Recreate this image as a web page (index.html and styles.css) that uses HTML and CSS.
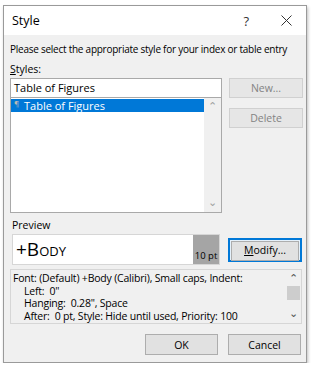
FILE: index.html
```html
<!DOCTYPE html>
<html lang="en">
<head>
    <meta charset="UTF-8">
    <title>Style</title>
    <link rel="stylesheet" href="styles.css">
</head>
<body>
    <div class="dialog">
        <div class="titlebar">
            <span class="title">Style</span>
            <span class="help">?</span>
            <svg class="close" width="11" height="11" viewBox="0 0 11 11">
                <path d="M0.5 0.5 L10.5 10.5 M10.5 0.5 L0.5 10.5" stroke="#333" stroke-width="1"/>
            </svg>
        </div>

        <div class="content">
            <p class="intro">Please select the appropriate style for your index or table entry</p>
            <div class="label"><u>S</u>tyles:</div>

            <div class="styles-row">
                <div class="styles-col">
                    <div class="name-input">Table of Figures</div>
                    <div class="listbox">
                        <div class="list-items">
                            <div class="list-item selected"><span class="pilcrow">¶</span>Table of Figures</div>
                        </div>
                        <div class="vscroll">
                            <span class="arrow">&#8963;</span>
                            <span class="arrow down">&#8964;</span>
                        </div>
                    </div>
                </div>
                <div class="side-buttons">
                    <button class="btn disabled">New...</button>
                    <button class="btn disabled">Delete</button>
                </div>
            </div>

            <div class="label preview-label">Preview</div>
            <div class="preview-row">
                <div class="preview">
                    <span class="sample">+Body</span>
                    <span class="size">10 pt</span>
                </div>
                <button class="btn focused"><span><u>M</u>odify...</span></button>
            </div>

            <div class="description">
                <div class="desc-text">
                    Font: (Default) +Body (Calibri), Small caps, Indent:<br>
                    <span class="indent">Left:&nbsp; 0"</span><br>
                    <span class="indent">Hanging:&nbsp; 0.28", Space</span><br>
                    <span class="indent">After:&nbsp; 0 pt, Style: Hide until used, Priority: 100</span>
                </div>
                <div class="vscroll small">
                    <span class="arrow">&#8963;</span>
                    <span class="thumb"></span>
                    <span class="arrow down">&#8964;</span>
                </div>
            </div>

            <div class="footer">
                <button class="btn">OK</button>
                <button class="btn">Cancel</button>
            </div>
        </div>
    </div>
</body>
</html>
```

FILE: styles.css
```css
body {
    margin: 0;
    padding: 0;
    background: #ffffff;
    font-family: 'Open Sans', 'Noto Sans', sans-serif;
    color: #000;
}

.dialog {
    width: 302px;
    height: 356px;
    margin: 5px 0 0 3px;
    background: #f0f0f0;
    border: 1px solid #9a9a9a;
    box-shadow: 1px 2px 3px rgba(0, 0, 0, 0.25);
    display: flex;
    flex-direction: column;
}

.titlebar {
    height: 29px;
    background: #ffffff;
    display: flex;
    align-items: center;
    padding-left: 8px;
}

.title {
    font-size: 12.5px;
    flex: 1;
}

.help {
    font-size: 13px;
    color: #333;
    margin-right: 32px;
}

.close {
    margin-right: 14px;
}

.content {
    padding: 5px 3px 0 6px;
    font-size: 10.5px;
}

.intro {
    margin: 0;
    height: 19px;
    line-height: 19px;
    font-size: 10px;
    letter-spacing: -0.25px;
    white-space: nowrap;
}

.label {
    height: 15px;
    line-height: 15px;
    margin-top: 3px;
}

.styles-row {
    display: flex;
    margin-top: 1px;
}

.styles-col {
    width: 212px;
}

.name-input {
    height: 18px;
    line-height: 17px;
    background: #fff;
    border: 1px solid #a9a9a9;
    border-bottom: none;
    padding-left: 3px;
    font-size: 11px;
}

.listbox {
    height: 114px;
    background: #fff;
    border: 1px solid #a9a9a9;
    display: flex;
}

.list-items {
    flex: 1;
    padding-top: 1px;
}

.list-item {
    height: 13px;
    line-height: 13px;
    font-size: 11px;
    padding-left: 3px;
}

.list-item.selected {
    background: #0078d7;
    color: #fff;
}

.pilcrow {
    display: inline-block;
    width: 8px;
    color: #b8b8b8;
    font-size: 8px;
    line-height: 8px;
    vertical-align: top;
    margin-right: 2px;
}

.vscroll {
    width: 17px;
    background: #f0f0f0;
    display: flex;
    flex-direction: column;
    justify-content: space-between;
    align-items: center;
    color: #a0a0a0;
}

.arrow {
    font-size: 11px;
    height: 14px;
    line-height: 16px;
}

.arrow.down {
    line-height: 8px;
}

.side-buttons {
    display: flex;
    flex-direction: column;
    gap: 10px;
    margin-left: 7px;
}

.btn {
    width: 74px;
    height: 20px;
    font-family: inherit;
    font-size: 10.5px;
    background: #e1e1e1;
    border: 1px solid #adadad;
    color: #000;
    padding: 0;
}

.btn.disabled {
    background: #e6e6e6;
    border-color: #d0d0d0;
    color: #838383;
}

.btn.focused {
    height: 24px;
    border: 2px solid #0078d7;
    background: #e5f1fb;
    padding: 1px;
}

.btn.focused span {
    display: block;
    height: 100%;
    line-height: 17px;
    background: #e1e1e1;
    border: 1px solid #adadad;
}

.preview-label {
    margin-top: 5px;
    padding-left: 2px;
}

.preview-row {
    display: flex;
    align-items: center;
    margin-top: 1px;
}

.preview {
    width: 208px;
    height: 31px;
    margin-left: 2px;
    background: #fff;
    border: 1px solid #d6d6d6;
    display: flex;
    box-sizing: border-box;
}

.sample {
    flex: 1;
    font-family: 'Open Sans', sans-serif;
    font-variant: small-caps;
    font-size: 19px;
    line-height: 29px;
    padding-left: 3px;
}

.size {
    width: 26px;
    background: #a5a5a5;
    font-size: 9.5px;
    display: flex;
    align-items: flex-end;
    justify-content: center;
    padding-bottom: 2px;
}

.preview-row .btn {
    margin-left: 8px;
}

.description {
    height: 53px;
    margin-top: 4px;
    margin-right: 1px;
    border: 1px solid #d6d6d6;
    display: flex;
}

.desc-text {
    flex: 1;
    font-size: 10.5px;
    line-height: 12.5px;
    padding: 2px 0 0 2px;
    letter-spacing: -0.2px;
}

.indent {
    padding-left: 11px;
}

.vscroll.small {
    width: 15px;
    color: #505050;
    justify-content: flex-start;
}

.vscroll.small .arrow.down {
    margin-top: auto;
}

.thumb {
    width: 13px;
    height: 14px;
    background: #cdcdcd;
    margin: 2px 0;
}

.footer {
    display: flex;
    justify-content: flex-end;
    gap: 10px;
    margin-top: 10px;
    padding-right: 2px;
}

.footer .btn {
    width: 73px;
    height: 21px;
}
```
